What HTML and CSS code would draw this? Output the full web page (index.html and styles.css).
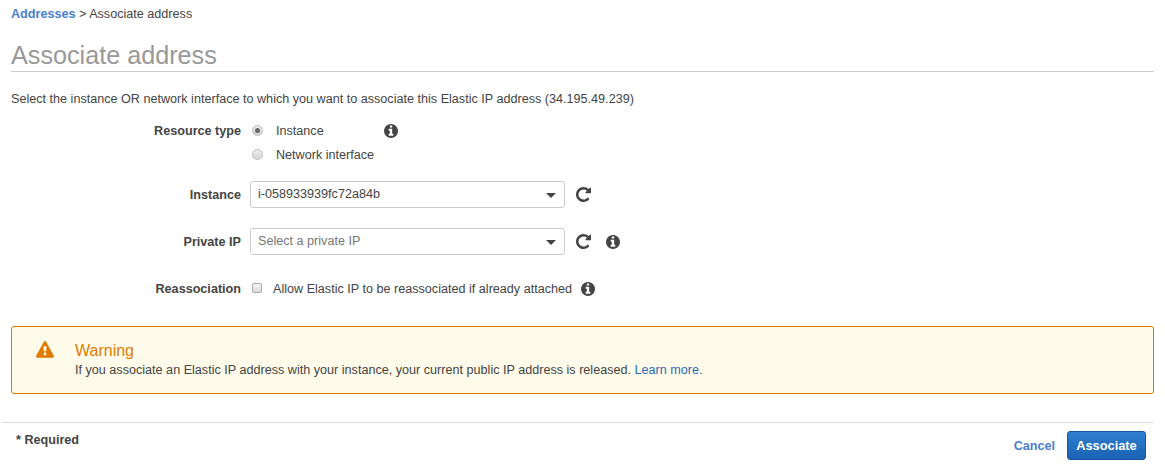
FILE: index.html
```html
<!DOCTYPE html>
<html>
	<head>
		<title>Associate address</title>
		<link rel="stylesheet" href="styles.css">
	</head>
	<body>
		<svg class="defs" width="0" height="0">
			<symbol id="icon-info" viewBox="128 128 1536 1536">
				<path d="M1152 1376v-160q0-14-9-23t-23-9h-96v-512q0-14-9-23t-23-9h-320q-14 0-23 9t-9 23v160q0 14 9 23t23 9h96v320h-96q-14 0-23 9t-9 23v160q0 14 9 23t23 9h448q14 0 23-9t9-23zm-128-896v-160q0-14-9-23t-23-9h-192q-14 0-23 9t-9 23v160q0 14 9 23t23 9h192q14 0 23-9t9-23zm640 416q0 209-103 385.5t-279.5 279.5-385.5 103-385.5-103-279.5-279.5-103-385.5 103-385.5 279.5-279.5 385.5-103 385.5 103 279.5 279.5 103 385.5z"/>
			</symbol>
			<symbol id="icon-refresh" viewBox="128 128 1536 1536">
				<path d="M1664 256v448q0 26-19 45t-45 19h-448q-42 0-59-40-17-39 14-69l138-138q-148-137-349-137-104 0-198.5 40.5t-163.5 109.5-109.5 163.5-40.5 198.5 40.5 198.5 109.5 163.5 163.5 109.5 198.5 40.5q119 0 225-52t179-147q7-10 23-12 15 0 25 9l137 138q9 8 9.5 20.5t-7.5 22.5q-109 132-264 204.5t-327 72.5q-156 0-298-61t-245-164-164-245-61-298 61-298 164-245 245-164 298-61q147 0 284.5 55.5t244.5 156.5l130-129q29-31 70-14 39 17 39 59z"/>
			</symbol>
		</svg>

		<div class="breadcrumb"><a href="#">Addresses</a> &gt; Associate address</div>

		<h1>Associate address</h1>

		<p class="intro">Select the instance OR network interface to which you want to associate this Elastic IP address (34.195.49.239)</p>

		<div class="form">
			<div class="row row-type">
				<div class="label">Resource type</div>
				<div class="radios">
					<div class="radio-line">
						<span class="radio checked"></span>
						<span class="radio-text">Instance</span>
						<svg class="icon info info-type"><use href="#icon-info"/></svg>
					</div>
					<div class="radio-line">
						<span class="radio"></span>
						<span class="radio-text">Network interface</span>
					</div>
				</div>
			</div>

			<div class="row row-select">
				<div class="label">Instance</div>
				<div class="select">i-058933939fc72a84b<span class="caret"></span></div>
				<svg class="icon refresh"><use href="#icon-refresh"/></svg>
			</div>

			<div class="row row-select">
				<div class="label">Private IP</div>
				<div class="select placeholder">Select a private IP<span class="caret"></span></div>
				<svg class="icon refresh"><use href="#icon-refresh"/></svg>
				<svg class="icon info"><use href="#icon-info"/></svg>
			</div>

			<div class="row row-check">
				<div class="label">Reassociation</div>
				<span class="checkbox"></span>
				<span class="check-text">Allow Elastic IP to be reassociated if already attached</span>
				<svg class="icon info"><use href="#icon-info"/></svg>
			</div>
		</div>

		<div class="warning">
			<svg class="warning-icon" viewBox="0 0 1792 1792"><path d="M1024 1375v-190q0-14-9.5-23.5t-22.5-9.5h-192q-13 0-22.5 9.5t-9.5 23.5v190q0 14 9.5 23.5t22.5 9.5h192q13 0 22.5-9.5t9.5-23.5zm-2-374l18-459q0-12-10-19-13-11-24-11h-220q-11 0-24 11-10 7-10 21l17 457q0 10 10 16.5t24 6.5h185q14 0 23.5-6.5t10.5-16.5zm-14-934l768 1408q35 63-2 126-17 29-46.5 46t-63.5 17h-1536q-34 0-63.5-17t-46.5-46q-37-63-2-126l768-1408q17-31 47-49t65-18 65 18 47 49z"/></svg>
			<div>
				<div class="warning-title">Warning</div>
				<div class="warning-text">If you associate an Elastic IP address with your instance, your current public IP address is released. <a href="#">Learn more.</a></div>
			</div>
		</div>

		<div class="footer">
			<div class="required">* Required</div>
			<div class="actions">
				<a class="cancel" href="#">Cancel</a>
				<button class="button-primary">Associate</button>
			</div>
		</div>
	</body>
</html>
```
FILE: styles.css
```css
* {
	margin: 0;
	padding: 0;
	box-sizing: border-box;
}

html, body {
	background: #fff;
	height: 100%;
	font-size: 12.62px;
	font-family: "Liberation Sans", Arial, sans-serif;
	color: #444;
	overflow: hidden;
}

body {
	padding: 0 11px 0 2px;
}

a {
	color: #3b73c4;
	text-decoration: none;
}

.defs {
	position: absolute;
}

.breadcrumb {
	padding: 7px 0 0 9px;
	height: 39px;
	line-height: 14px;
	color: #444;
}

.breadcrumb a {
	color: #4a80d0;
	font-weight: bold;
}

h1 {
	margin-left: 9px;
	height: 33px;
	line-height: 33px;
	font-size: 25.2px;
	font-weight: normal;
	color: #999;
	border-bottom: 1px solid #ccc;
}

.intro {
	margin: 20px 0 0 9px;
	line-height: 14px;
}

.form {
	margin-top: 12px;
}

.row {
	display: flex;
	align-items: center;
}

.label {
	width: 239px;
	flex: none;
	text-align: right;
	font-weight: bold;
	margin-right: 9px;
}

.row-type {
	align-items: flex-start;
	height: 63px;
	padding-top: 1px;
}

.row-type .label {
	line-height: 24px;
}

.radio-line {
	display: flex;
	align-items: center;
	height: 24px;
}

.radio {
	width: 11px;
	height: 11px;
	margin: -1px 0 0 2px;
	border: 1px solid #bbb;
	border-radius: 50%;
	background: linear-gradient(#eee, #d4d4d4);
	position: relative;
}

.radio.checked:after {
	content: "";
	position: absolute;
	top: 2px;
	left: 2px;
	width: 5px;
	height: 5px;
	border-radius: 50%;
	background: #666;
}

.radio-text {
	margin-left: 13px;
}

.icon {
	width: 14px;
	height: 14px;
	fill: #444;
	flex: none;
}

.info-type {
	margin-left: 60px;
}

.row-select {
	height: 27px;
	margin-bottom: 20px;
}

.select {
	width: 315px;
	height: 27px;
	line-height: 25px;
	padding-left: 7px;
	border: 1px solid #ccc;
	border-radius: 3px;
	position: relative;
	color: #444;
}

.select.placeholder {
	color: #777;
}

.caret {
	position: absolute;
	right: 8px;
	top: 11px;
	border-top: 5px solid #444;
	border-left: 5px solid transparent;
	border-right: 5px solid transparent;
}

.refresh {
	margin-left: 11px;
	width: 15px;
	height: 15px;
}

.refresh + .info {
	margin-left: 15px;
}

.row-check {
	height: 27px;
}

.checkbox {
	width: 10px;
	height: 10px;
	margin: -1px 0 0 2px;
	border: 1px solid #aaa;
	border-radius: 2px;
	background: linear-gradient(#f2f2f2, #ddd);
}

.check-text {
	margin-left: 11px;
}

.row-check .info {
	margin-left: 9px;
}

.warning {
	display: flex;
	align-items: flex-start;
	margin: 24px 0 0 9px;
	height: 68px;
	border: 1px solid #e07b00;
	border-radius: 3px;
	background: #fffbea;
	padding: 15px 0 0 24px;
}

.warning-icon {
	width: 18px;
	height: 18px;
	margin-top: -1px;
	fill: #e07b00;
	margin-right: 21px;
	flex: none;
}

.warning-title {
	font-size: 16px;
	line-height: 18px;
	color: #e07b00;
}

.warning-text {
	line-height: 17px;
	margin-top: 2px;
}

.warning-text a {
	color: #2a6cb8;
}

.footer {
	display: flex;
	justify-content: space-between;
	margin-top: 28px;
	height: 50px;
	border-top: 1px solid #ddd;
	padding: 8px 8px 0 14px;
}

.required {
	font-weight: bold;
	line-height: 17px;
	margin-top: 1px;
}

.actions {
	display: flex;
	align-items: center;
	height: 29px;
}

.cancel {
	font-weight: bold;
	color: #4a80d0;
	margin-right: 12px;
}

.button-primary {
	width: 79px;
	height: 29px;
	border: 1px solid #15569e;
	border-radius: 3px;
	background: linear-gradient(#2f7fd0, #1a62b4);
	color: #fff;
	font: bold 12.8px "Liberation Sans", Arial, sans-serif;
}
```
